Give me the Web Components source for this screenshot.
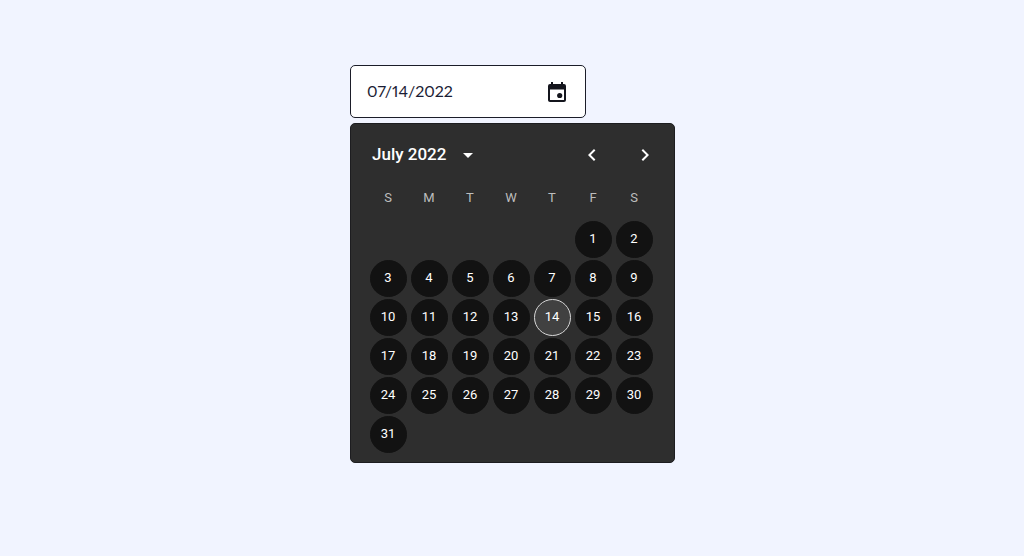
<!DOCTYPE html>
<html lang="en">
<head>
<meta charset="utf-8">
<meta name="viewport" content="width=device-width, initial-scale=1">
<title>Date picker</title>
<style>
  body { margin: 0; min-height: 100vh; background: #f1f4ff; font-family: Roboto, "Liberation Sans", sans-serif; }
</style>
</head>
<body>
<date-picker></date-picker>
<script>
class DateField extends HTMLElement {
  connectedCallback() {
    this.attachShadow({ mode: 'open' }).innerHTML = `
      <style>
        :host { display: flex; align-items: center; box-sizing: border-box; height: 53px; padding: 0 16px;
          background: #fff; border: 1px solid #1b1d29; border-radius: 5px; }
        input { flex: 1; min-width: 0; padding: 0 0 2px; border: 0; outline: 0; background: none;
          font: 400 16px/24px Lato, "Open Sans", sans-serif; font-variant-numeric: proportional-nums; color: #1b1d35; }
        button { display: flex; padding: 0; border: 0; background: none; color: #14151d; cursor: pointer; }
        svg { width: 24px; height: 24px; }
      </style>
      <input type="text" aria-label="Date" value="${this.getAttribute('value')}">
      <button type="button" aria-label="Toggle calendar">
        <svg viewBox="0 0 24 24" fill="currentColor" aria-hidden="true">
          <path d="M19 4h-1V2h-2v2H8V2H6v2H5a2 2 0 0 0-2 2v14c0 1.100.9 2 2 2h14a2 2 0 0 0 2-2V6a2 2 0 0 0-2-2zm0 16H5V9.500h14V20z"/>
          <circle cx="14.700" cy="15.500" r="2.600"/>
        </svg>
      </button>`;
  }
}
customElements.define('date-field', DateField);

class CalendarHeader extends HTMLElement {
  connectedCallback() {
    this.attachShadow({ mode: 'open' }).innerHTML = `
      <style>
        :host { display: flex; align-items: center; justify-content: space-between; height: 30px; color: #fff; }
        button { display: flex; align-items: center; justify-content: center; height: 30px; padding: 0; border: 0;
          background: none; color: inherit; cursor: pointer; font: 500 17px/24px Roboto, "Liberation Sans", sans-serif; }
        .month { gap: 10px; }
        .month span { padding-bottom: 2px; }
        nav { display: flex; gap: 29px; }
        svg { width: 24px; height: 24px; }
      </style>
      <button type="button" class="month"><span><slot></slot></span>
        <svg viewBox="0 0 24 24" fill="currentColor" aria-hidden="true"><path d="M7 10l5 5 5-5z"/></svg>
      </button>
      <nav aria-label="Change month">
        <button type="button" aria-label="Previous month"><svg viewBox="0 0 24 24" fill="currentColor"><path d="M15.410 7.410 14 6l-6 6 6 6 1.410-1.410L10.830 12z"/></svg></button>
        <button type="button" aria-label="Next month"><svg viewBox="0 0 24 24" fill="currentColor"><path d="M10 6 8.590 7.410 13.170 12l-4.580 4.590L10 18l6-6z"/></svg></button>
      </nav>`;
  }
}
customElements.define('calendar-header', CalendarHeader);

class CalendarDay extends HTMLElement {
  connectedCallback() {
    this.attachShadow({ mode: 'open' }).innerHTML = `
      <style>
        :host { display: block; }
        button { display: block; box-sizing: border-box; width: 37px; height: 37px; padding: 0 1px 2px 0; border: 1px solid #121212;
          border-radius: 50%; background: #121212; color: #fff; cursor: pointer;
          font: 13px/16px Roboto, "Liberation Sans", sans-serif; }
        :host([selected]) button { background: #414141; border-color: #d8d8d8; }
      </style>
      <button type="button"><slot></slot></button>`;
  }
}
customElements.define('calendar-day', CalendarDay);

class CalendarMonth extends HTMLElement {
  connectedCallback() {
    const first = Number(this.getAttribute('start'));
    const days = Number(this.getAttribute('days'));
    const selected = Number(this.getAttribute('selected'));
    let rows = '';
    for (let from = 1 - first; from <= days; from += 7) {
      rows += '<tr>';
      for (let d = from; d < from + 7; d++) {
        rows += d < 1 || d > days ? '<td></td>'
          : `<td><calendar-day${d === selected ? ' selected' : ''}>${d}</calendar-day></td>`;
      }
      rows += '</tr>';
    }
    this.attachShadow({ mode: 'open' }).innerHTML = `
      <style>
        :host { display: block; }
        table { border-collapse: separate; border-spacing: 4px 2px; }
        th { width: 36px; height: 38px; padding: 0 1px 2px 0; color: #bdbdbd; font: 13px/16px Roboto, "Liberation Sans", sans-serif; }
        td { width: 37px; height: 37px; padding: 0; }
      </style>
      <table>
        <thead><tr>${[...'SMTWTFS'].map(d => `<th scope="col">${d}</th>`).join('')}</tr></thead>
        <tbody>${rows}</tbody>
      </table>`;
  }
}
customElements.define('calendar-month', CalendarMonth);

class DatePicker extends HTMLElement {
  connectedCallback() {
    this.attachShadow({ mode: 'open' }).innerHTML = `
      <style>
        :host { display: flex; flex-direction: column; align-items: center; padding: 65px 16px 65px 17px; }
        .picker { display: flex; flex-direction: column; gap: 5px; }
        date-field { width: 236px; }
        section { box-sizing: border-box; padding: 16px 17px 7px 15px; background: #2e2e2e;
          border: 1px solid #1d1d20; border-radius: 5px; }
        calendar-header { padding: 0 0 0 6px; margin-bottom: 7px; }
      </style>
      <div class="picker">
        <date-field value="07/14/2022"></date-field>
        <section aria-label="Calendar">
          <calendar-header>July 2022</calendar-header>
          <calendar-month start="5" days="31" selected="14"></calendar-month>
        </section>
      </div>`;
  }
}
customElements.define('date-picker', DatePicker);
</script>
</body>
</html>
